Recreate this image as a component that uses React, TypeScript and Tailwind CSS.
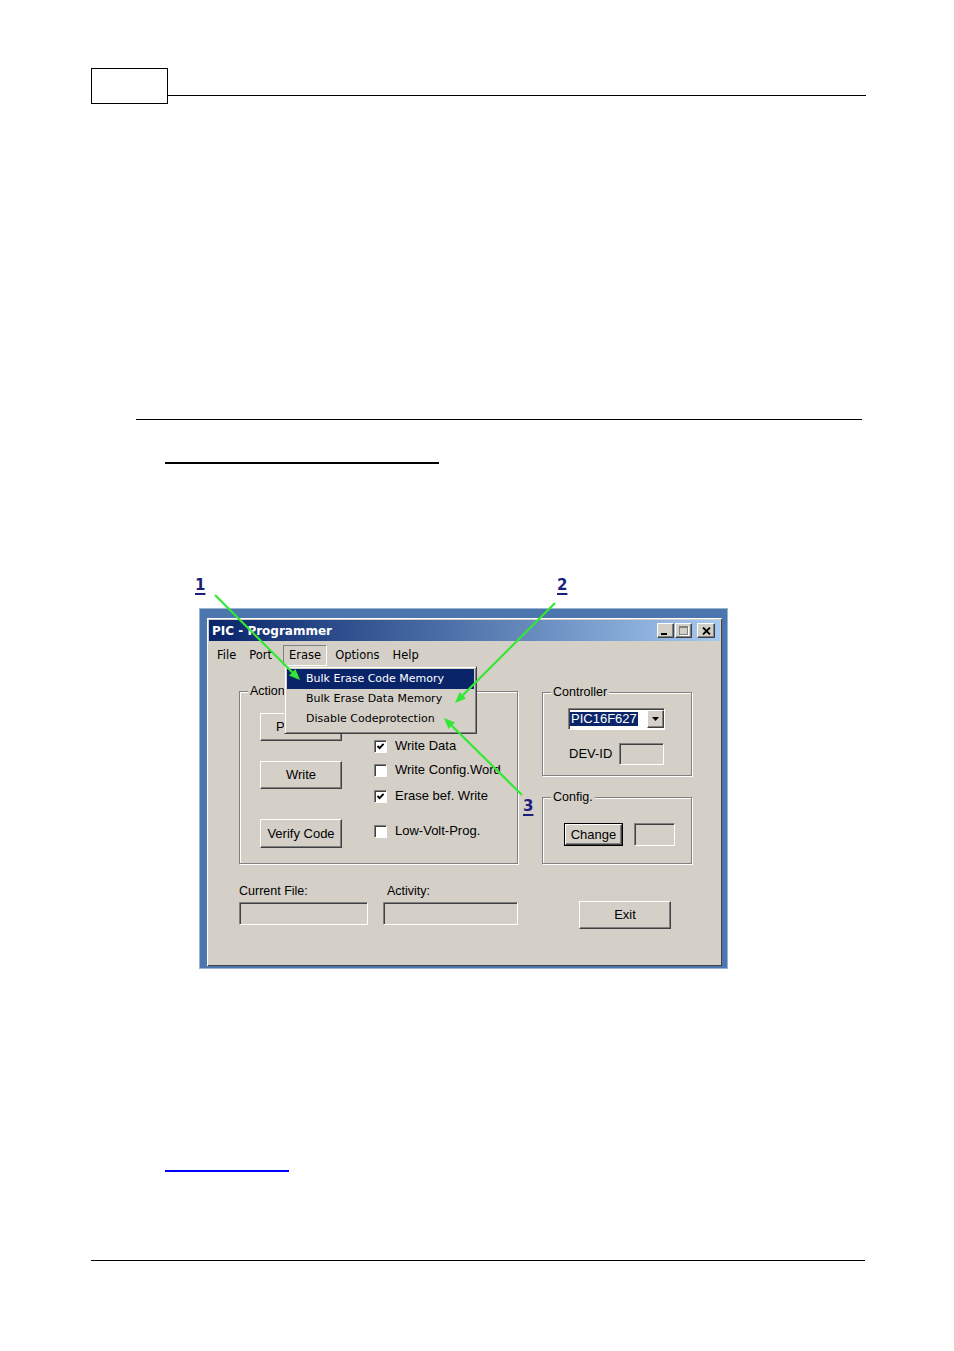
const ui = "font-['Liberation_Sans',Arial,sans-serif] text-[12.5px] leading-[14px] text-black"
const tahoma = "font-['DejaVu_Sans',Verdana,sans-serif]"

const raised =
  'border border-t-white border-l-white border-r-[#404040] border-b-[#404040] shadow-[inset_-1px_-1px_0_#808080] bg-[#d4d0c8]'
const sunken =
  'border border-t-[#808080] border-l-[#808080] border-r-white border-b-white shadow-[inset_1px_1px_0_#404040]'

function Button({ label, className = '' }: { label: string; className?: string }) {
  return <div className={`${raised} ${ui} flex items-center justify-center text-[13px] ${className}`}>{label}</div>
}

function Field({ className = '' }: { className?: string }) {
  return <div className={`${sunken} bg-[#d4d0c8] ${className}`} />
}

function Group({ label, className = '', children }: { label: string; className?: string; children?: React.ReactNode }) {
  return (
    <div className={`relative border border-[#808080] shadow-[inset_1px_1px_0_#fff,1px_1px_0_#fff] ${className}`}>
      <span className={`${ui} absolute -top-[8px] left-[8px] bg-[#d4d0c8] px-[2px]`}>{label}</span>
      {children}
    </div>
  )
}

function Check({ label, checked = false, className = '' }: { label: string; checked?: boolean; className?: string }) {
  return (
    <div className={`flex h-[16px] items-center ${className}`}>
      <div className={`${sunken} flex h-[13px] w-[13px] items-center justify-center bg-white`}>
        {checked && (
          <svg width="9" height="9" viewBox="0 0 9 9">
            <polyline points="1.5,4 3.6,6.2 7.6,1.8" fill="none" stroke="#000" strokeWidth="1.9" />
          </svg>
        )}
      </div>
      <span className={`${ui} ml-[8px] text-[13px]`}>{label}</span>
    </div>
  )
}

function TitleButton({ kind, className = '' }: { kind: 'min' | 'max' | 'close'; className?: string }) {
  return (
    <div className={`${raised} flex h-[15px] items-center justify-center ${className}`}>
      {kind === 'min' && <div className="mt-[6px] mr-[3px] h-[2px] w-[6px] bg-black" />}
      {kind === 'max' && (
        <div className="h-[9px] w-[9px] border border-t-2 border-[#808080] shadow-[1px_1px_0_#fff]" />
      )}
      {kind === 'close' && (
        <svg width="9" height="8" viewBox="0 0 9 8">
          <path d="M1 0.5 L8 7.5 M8 0.5 L1 7.5" stroke="#000" strokeWidth="1.8" />
        </svg>
      )}
    </div>
  )
}

function Arrow({ x1, y1, x2, y2 }: { x1: number; y1: number; x2: number; y2: number }) {
  const dx = x2 - x1
  const dy = y2 - y1
  const len = Math.hypot(dx, dy)
  const ux = dx / len
  const uy = dy / len
  const bx = x2 - ux * 11
  const by = y2 - uy * 11
  const px = -uy * 4.5
  const py = ux * 4.5
  return (
    <g>
      <line x1={x1} y1={y1} x2={bx} y2={by} stroke="#33e833" strokeWidth="2.2" />
      <polygon points={`${x2},${y2} ${bx + px},${by + py} ${bx - px},${by - py}`} fill="#33e833" />
    </g>
  )
}

function MenuItem({ label, className = '' }: { label: string; className?: string }) {
  return <span className={`flex h-[21px] items-center px-[6px] ${className}`}>{label}</span>
}

function Window() {
  return (
    <div className="h-[361px] w-[529px] border border-[#9db3d2] bg-[#4b76ae] pt-[9px] pr-[5px] pb-[2px] pl-[7px]">
      <div className="flex h-[348px] w-[515px] flex-col bg-[#d4d0c8] p-[2px] shadow-[inset_1px_1px_0_#fff,inset_-1px_-1px_0_#404040]">
        <div className="flex h-[21px] items-center bg-gradient-to-r from-[#0a246a] to-[#a6caf0] pl-[3px] pr-[5px]">
          <span className={`${tahoma} flex-1 text-[12px] font-bold text-white`}>PIC - Programmer</span>
          <TitleButton kind="min" className="w-[17px]" />
          <TitleButton kind="max" className="ml-[1px] w-[17px]" />
          <TitleButton kind="close" className="ml-[5px] w-[18px]" />
        </div>

        <div className={`${tahoma} flex h-[25px] items-start pt-[4px] pl-[2px] text-[11.5px] text-black`}>
          <MenuItem label="File" />
          <MenuItem label="Port" className="ml-[1px]" />
          <span className="ml-[5px] flex h-[21px] items-center border border-t-[#808080] border-l-[#808080] border-r-white border-b-white px-[5px]">
            Erase
          </span>
          <MenuItem label="Options" className="ml-[2px]" />
          <MenuItem label="Help" className="ml-[1px]" />
        </div>

        <div className="flex items-start pt-[25px] pl-[30px]">
          <Group label="Action" className="flex h-[173px] w-[279px] pt-[21px] pl-[20px]">
            <div className="flex w-[82px] flex-col">
              <Button label="Program" className="h-[28px]" />
              <Button label="Write" className="mt-[20px] h-[28px]" />
              <Button label="Verify Code" className="mt-[30px] h-[29px]" />
            </div>
            <div className="ml-[32px] flex flex-col">
              <Check label="Write Data" checked className="mt-[25px]" />
              <Check label="Write Config.Word" className="mt-[8px]" />
              <Check label="Erase bef. Write" checked className="mt-[10px]" />
              <Check label="Low-Volt-Prog." className="mt-[19px]" />
            </div>
          </Group>

          <div className="mt-[1px] ml-[24px] flex flex-col">
            <Group label="Controller" className="h-[84px] w-[150px] pt-[15px] pl-[25px]">
              <div className={`${sunken} flex h-[22px] w-[97px] items-center bg-white pl-[1px]`}>
                <span className={`${ui} bg-[#0a246a] px-[1px] text-[13px] text-white`}>PIC16F627</span>
                <div className="flex-1" />
                <div className={`${raised} flex h-[18px] w-[17px] items-center justify-center`}>
                  <svg width="7" height="4" viewBox="0 0 7 4">
                    <polygon points="0,0 7,0 3.5,4" fill="#000" />
                  </svg>
                </div>
              </div>
              <div className="mt-[13px] flex items-center">
                <span className={`${ui} pl-[1px] text-[13px]`}>DEV-ID</span>
                <Field className="ml-[7px] h-[22px] w-[45px]" />
              </div>
            </Group>

            <Group label="Config." className="mt-[21px] flex h-[67px] w-[150px] items-start pt-[25px] pl-[21px]">
              <div className="h-[23px] w-[59px] border border-black">
                <Button label="Change" className="h-full w-full" />
              </div>
              <Field className="ml-[11px] h-[23px] w-[41px]" />
            </Group>
          </div>
        </div>

        <div className="mt-[20px] flex items-start pl-[30px]">
          <div className="flex w-[129px] flex-col">
            <span className={ui}>Current File:</span>
            <Field className="mt-[4px] h-[23px] w-full" />
          </div>
          <div className="ml-[15px] flex w-[135px] flex-col">
            <span className={`${ui} pl-[4px]`}>Activity:</span>
            <Field className="mt-[4px] h-[23px] w-full" />
          </div>
          <Button label="Exit" className="mt-[17px] ml-[61px] h-[28px] w-[92px]" />
        </div>
      </div>
    </div>
  )
}

function Number({ n, className }: { n: string; className: string }) {
  return (
    <span
      className={`${tahoma} absolute text-[15px] font-semibold leading-[18px] text-[#1c1f7c] underline decoration-2 underline-offset-[3px] ${className}`}
    >
      {n}
    </span>
  )
}

export default function App() {
  return (
    <div className="min-h-[1351px] w-full bg-white">
      <div className="flex pt-[68px] pr-[88px] pl-[91px]">
        <div className="h-[36px] w-[77px] border border-black" />
        <div className="mt-[27px] h-px flex-1 bg-black" />
      </div>

      <div className="mt-[315px] ml-[136px] h-px w-[726px] bg-black" />
      <div className="mt-[42px] ml-[165px] h-[2px] w-[274px] bg-black" />

      <div className="relative mt-[106px] pt-[38px] pl-[199px]">
        <Window />

        <div
          className={`${tahoma} absolute top-[96px] left-[284px] w-[193px] border border-t-[#d4d0c8] border-l-[#d4d0c8] border-r-[#404040] border-b-[#404040] bg-[#d4d0c8] p-[2px] pb-[3px] text-[11px] text-black shadow-[inset_1px_1px_0_#fff,inset_-1px_-1px_0_#808080]`}
        >
          <div className="flex h-[20px] items-center bg-[#0a246a] pl-[19px] text-white">Bulk Erase Code Memory</div>
          <div className="flex h-[20px] items-center pl-[19px]">Bulk Erase Data Memory</div>
          <div className="flex h-[21px] items-center pl-[19px]">Disable Codeprotection</div>
        </div>

        <svg className="pointer-events-none absolute top-0 left-0" width="954" height="400">
          <Arrow x1={215} y1={25} x2={300} y2={110} />
          <Arrow x1={555} y1={33} x2={455} y2={133} />
          <Arrow x1={522} y1={225} x2={444} y2={148} />
        </svg>

        <Number n="1" className="top-[6px] left-[195px]" />
        <Number n="2" className="top-[6px] left-[557px]" />
        <Number n="3" className="top-[227px] left-[523px]" />
      </div>

      <div className="mt-[201px] ml-[165px] h-[2px] w-[124px] bg-[#0000ff]" />
      <div className="mt-[88px] ml-[91px] h-px w-[774px] bg-black" />
    </div>
  )
}
